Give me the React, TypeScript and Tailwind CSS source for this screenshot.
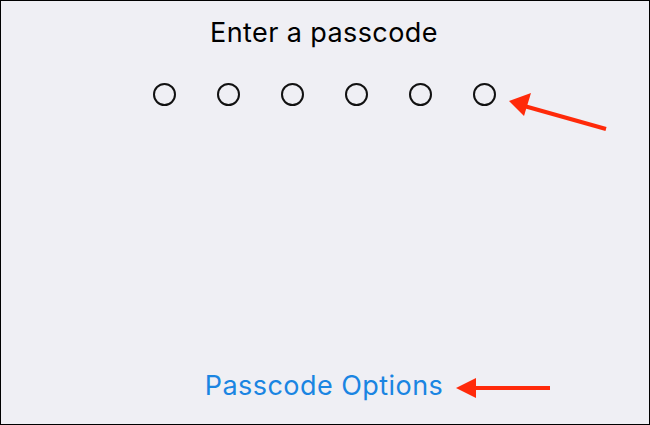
export default function App() {
  const dots = [0, 1, 2, 3, 4, 5];
  return (
    <div className="relative w-[650px] h-[425px] bg-[#efeff4] border border-black flex flex-col items-center overflow-hidden" style={{ fontFamily: 'Inter, "Liberation Sans", sans-serif' }}>
      <div className="mt-[13px] text-[27px] leading-[38px] text-black tracking-[0.4px] mr-[2px]">Enter a passcode</div>
      <div className="mt-[31px] flex gap-[41px] mr-[2px]">
        {dots.map((d) => (
          <div key={d} className="w-[23px] h-[23px] rounded-full border-2 border-[#111]" />
        ))}
      </div>
      <div className="flex-1" />
      <div className="mb-[21px] text-[27px] leading-[34px] text-[#1a85e2] tracking-[0.45px] mr-[2px]">Passcode Options</div>
      <svg className="absolute left-0 top-0" width="650" height="425" viewBox="0 0 650 425">
        <line x1="605" y1="128" x2="525" y2="105.5" stroke="#ff2a0a" strokeWidth="4" />
        <polygon points="508,100 530,92 523,115" fill="#ff2a0a" />
        <line x1="549" y1="387" x2="470" y2="387" stroke="#ff2a0a" strokeWidth="4" />
        <polygon points="455,387 475,377 475,397" fill="#ff2a0a" />
      </svg>
    </div>
  );
}
